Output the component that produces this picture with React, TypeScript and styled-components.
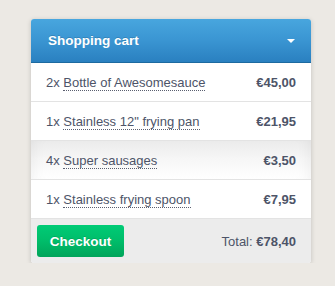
import React from "react";
import styled, { createGlobalStyle } from "styled-components";

const Global = createGlobalStyle`
  html, body { margin: 0; padding: 0; }
  body {
    background: #ece9e4;
    font-family: "Liberation Sans", Arial, sans-serif;
  }
`;

const Page = styled.div`
  padding: 19px 0 0 31px;
`;

const Panel = styled.div`
  width: 280px;
  border-radius: 3px;
  background: #fff;
  box-shadow: 0 1px 5px rgba(0, 0, 0, 0.18);
  overflow: hidden;
`;

const Header = styled.div`
  height: 43px;
  display: flex;
  align-items: center;
  justify-content: space-between;
  padding: 0 16px 0 17px;
  background: linear-gradient(to bottom, #48a6de 0%, #3a95d2 50%, #2a80c0 100%);
  border-bottom: 1px solid #1d6aa0;
  color: #fff;
  font-size: 13.5px;
  font-weight: bold;
  text-shadow: 0 -1px 0 rgba(0, 0, 0, 0.15);
`;

const Caret = styled.span`
  width: 0;
  height: 0;
  border-left: 4px solid transparent;
  border-right: 4px solid transparent;
  border-top: 4px solid #fff;
  margin-top: 1px;
`;

const Row = styled.div<{ $hl?: boolean; $last?: boolean }>`
  height: 38px;
  display: flex;
  align-items: center;
  justify-content: space-between;
  padding: 0 15px;
  font-size: 13px;
  color: #4d5468;
  border-bottom: ${(p) => (p.$last ? "none" : "1px solid #e3e3e3")};
  background: ${(p) =>
    p.$hl
      ? "linear-gradient(to bottom, #ebebeb 0%, #f6f6f6 45%, #ffffff 100%)"
      : "#fff"};
  box-shadow: ${(p) =>
    p.$hl ? "inset 12px 0 14px -10px rgba(0,0,0,0.05), inset -12px 0 14px -10px rgba(0,0,0,0.05)" : "none"};
`;

const Name = styled.span`
  border-bottom: 1px dotted #5a5f70;
`;

const Price = styled.span`
  font-weight: bold;
`;

const Footer = styled.div`
  height: 45px;
  display: flex;
  align-items: center;
  justify-content: space-between;
  padding: 0 15px 0 6px;
  background: #ececec;
  border-top: 1px solid #e3e3e3;
  box-sizing: border-box;
`;

const Checkout = styled.button`
  width: 87px;
  height: 32px;
  border: none;
  border-radius: 3px;
  background: linear-gradient(to bottom, #00cb76 0%, #00bd6a 50%, #00a45a 100%);
  color: #fff;
  font-family: "Liberation Sans", Arial, sans-serif;
  font-size: 13.5px;
  font-weight: bold;
  text-shadow: 0 -1px 0 rgba(0, 0, 0, 0.12);
  padding: 0;
  cursor: pointer;
`;

const Total = styled.span`
  font-size: 13px;
  color: #4d5468;
  b { font-weight: bold; }
`;

const items = [
  { qty: 2, name: "Bottle of Awesomesauce", price: "€45,00" },
  { qty: 1, name: "Stainless 12\" frying pan", price: "€21,95" },
  { qty: 4, name: "Super sausages", price: "€3,50", hl: true },
  { qty: 1, name: "Stainless frying spoon", price: "€7,95" },
];

export default function App() {
  return (
    <>
      <Global />
      <Page>
        <Panel>
          <Header>
            <span>Shopping cart</span>
            <Caret />
          </Header>
          {items.map((it, i) => (
            <Row key={i} $hl={it.hl} $last={i === items.length - 1}>
              <span>
                {it.qty}x <Name>{it.name}</Name>
              </span>
              <Price>{it.price}</Price>
            </Row>
          ))}
          <Footer>
            <Checkout>Checkout</Checkout>
            <Total>
              Total: <b>€78,40</b>
            </Total>
          </Footer>
        </Panel>
      </Page>
    </>
  );
}
